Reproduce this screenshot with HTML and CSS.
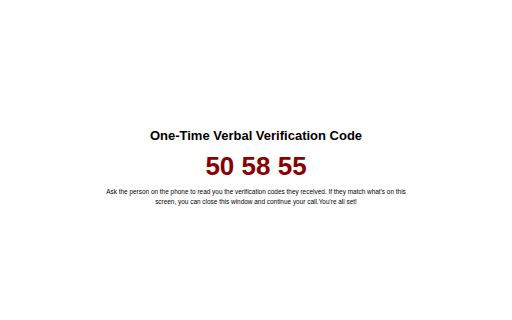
FILE: index.html
```html
<!DOCTYPE html>
<html lang="en">
<head>
  <meta charset="UTF-8" />
  <meta name="viewport" content="width=device-width, initial-scale=1" />
  <title>Verbal Verification</title>
  <link rel="stylesheet" href="styles.css">
</head>
<body>

<div class="verify">
  <h1 class="verify-title">One-Time Verbal Verification Code</h1>
  <div class="verify-code">50 58 55</div>
  <p class="verify-text">
    Ask the person on the phone to read you the verification codes they received. If they match what's on this screen, you can close this window and continue your call.You're all set!
  </p>
</div>

</body>
</html>
```

FILE: styles.css
```css
body {
  margin: 0;
  height: 100vh;
  display: flex;
  justify-content: center;
  align-items: center;
  font-family: "Liberation Sans", Arial, sans-serif;
  background: #fff;
  color: #000;
}

.verify {
  width: 310px;
  text-align: center;
  padding-top: 14px;
}

.verify-title {
  margin: 0;
  font-size: 13px;
  font-weight: bold;
}

.verify-code {
  margin-top: 8px;
  font-size: 26px;
  font-weight: bold;
  color: #8b0000;
}

.verify-text {
  margin: 5px 0 0;
  font-size: 6.45px;
  line-height: 10px;
}
```
